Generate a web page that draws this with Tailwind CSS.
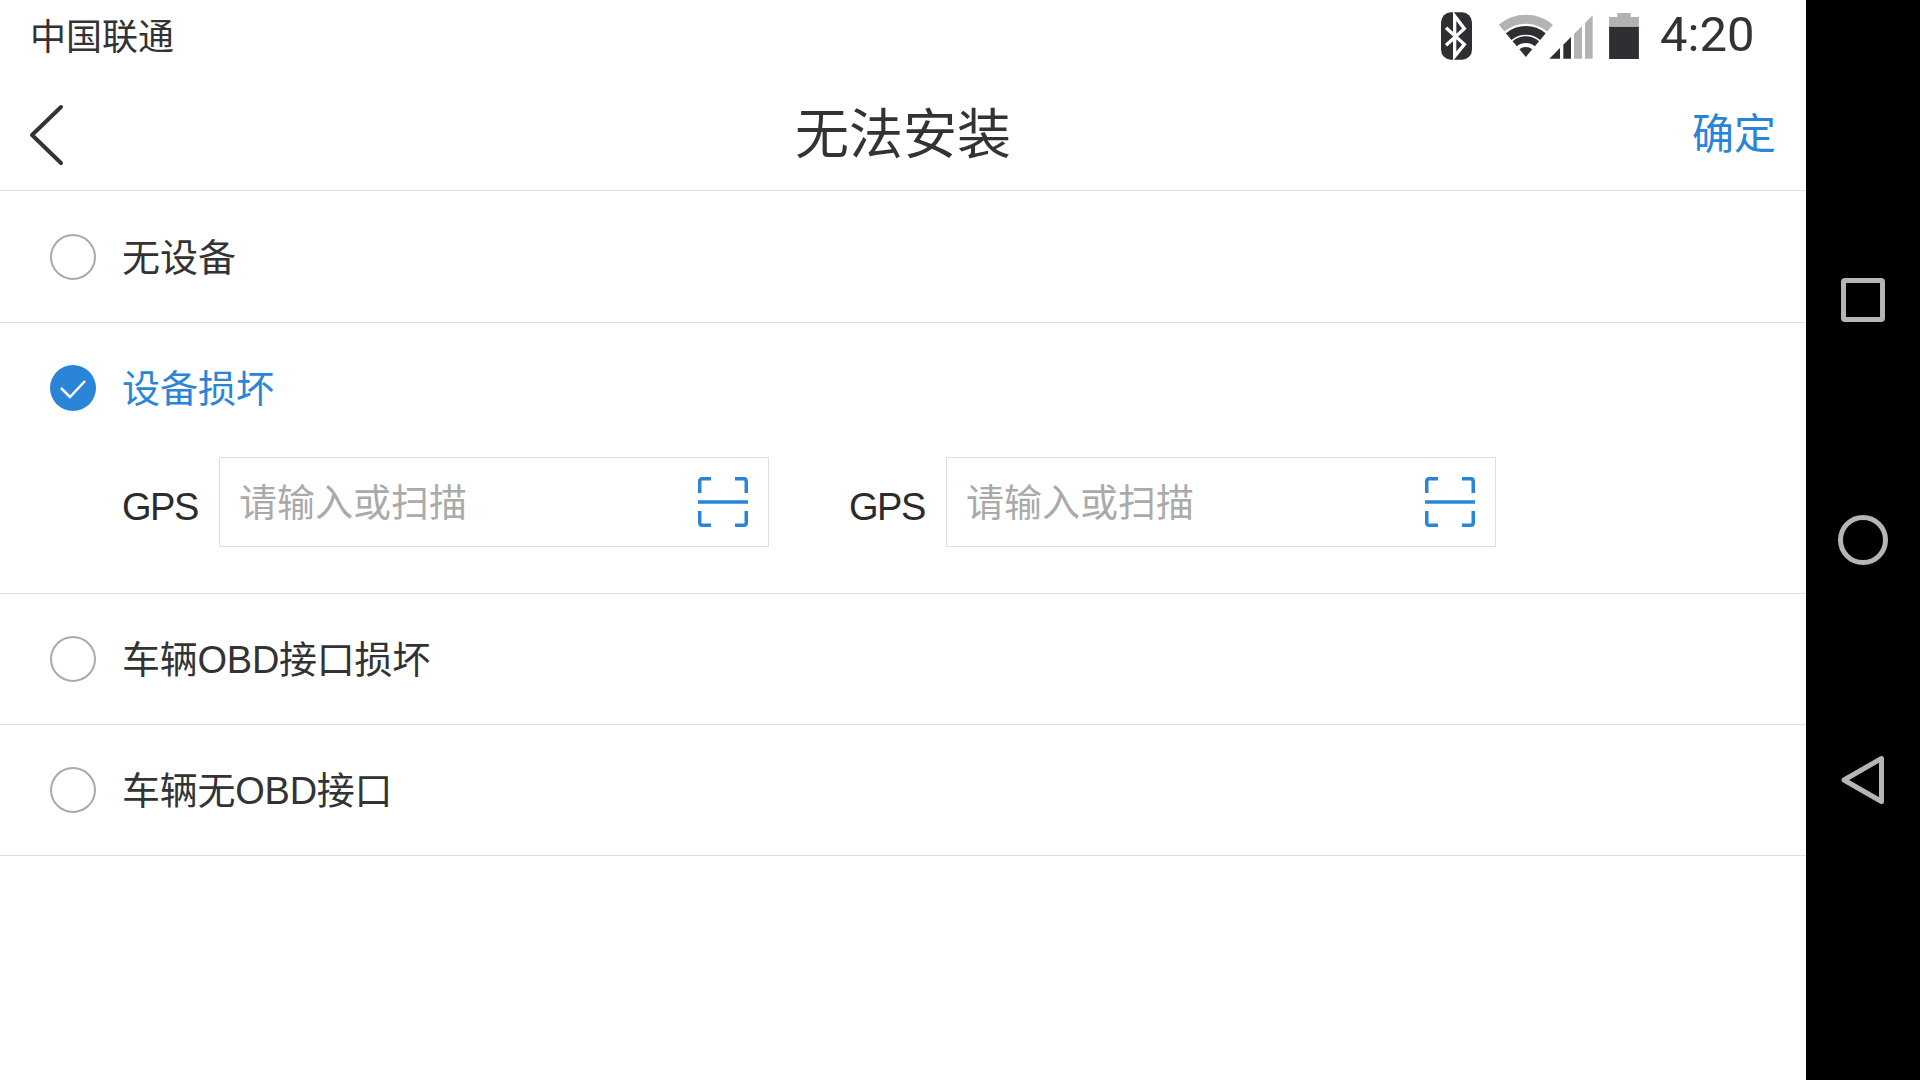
<!DOCTYPE html>
<html lang="zh-CN">
<head>
  <meta charset="UTF-8">
  <title>无法安装</title>
  <script src="https://cdn.jsdelivr.net/npm/@tailwindcss/browser@4"></script>
</head>
<body class="bg-black font-['Liberation_Sans','Noto_Sans_CJK_SC',sans-serif] text-[#333333]">
  <div class="flex h-[1080px] w-[1920px] overflow-hidden">
    <main class="h-full w-[1806px] bg-white">
      <!-- status bar -->
      <div class="flex h-[72px] items-center pl-[30px]">
        <span class="mt-[4px] text-[36px] leading-none">中国联通</span>
        <svg class="ml-[1267px] h-[48px] w-[31px]" viewBox="122 36 93 142">
          <rect x="122" y="36" width="93" height="142" rx="30" fill="#2e2f33"/>
          <polyline points="137,82 192,132 163,168 163,47 192,85 137,135" fill="none" stroke="#fff" stroke-width="10"/>
        </svg>
        <svg class="ml-[26px] h-[44px] w-[58px]" viewBox="295 43 173 132">
          <path d="M305.4 85.4 A113 113 0 0 1 450.6 85.4" fill="none" stroke="#b3b3b3" stroke-width="27"/>
          <path d="M326.6 110.7 A80 80 0 0 1 429.4 110.7" fill="none" stroke="#2e2f33" stroke-width="26"/>
          <path d="M344.6 132.2 A52 52 0 0 1 411.4 132.2" fill="none" stroke="#2e2f33" stroke-width="20"/>
          <path d="M378 172 L358.7 149 A30 30 0 0 1 397.3 149 Z" fill="#2e2f33"/>
        </svg>
        <svg class="-ml-[7px] mt-[1px] h-[44px] w-[44px]" viewBox="447 47 132 132">
          <polygon points="448,178 480,146 480,178" fill="#2e2f33"/>
          <polygon points="490,136 513,113 513,178 490,178" fill="#2e2f33"/>
          <polygon points="522,104 546,80 546,178 522,178" fill="#b3b3b3"/>
          <polygon points="555,71 578,48 578,178 555,178" fill="#b3b3b3"/>
        </svg>
        <svg class="ml-[16px] h-[46px] w-[30px]" viewBox="630 38 90 139">
          <rect x="655" y="38" width="40" height="13" fill="#b3b3b3"/>
          <rect x="630" y="50" width="90" height="30" fill="#b3b3b3"/>
          <rect x="630" y="80" width="90" height="97" fill="#2e2f33"/>
        </svg>
        <span class="-mt-[3px] ml-[21px] font-['Roboto',sans-serif] text-[49px] leading-none">4:20</span>
      </div>

      <!-- title bar -->
      <header class="relative flex h-[119px] items-center justify-center border-b border-[#e0e0e0] pt-[7px]">
        <svg class="absolute left-[28px] top-[32px] h-[62px] w-[36px]" viewBox="0 0 36 62">
          <polyline points="33,3 4,31 33,59" fill="none" stroke="#333" stroke-width="4" stroke-linecap="round" stroke-linejoin="round"/>
        </svg>
        <h1 class="text-[54px] leading-none">无法安装</h1>
        <a class="absolute right-[30px] top-[42px] text-[42px] leading-none text-[#2a85d8]">确定</a>
      </header>

      <!-- options -->
      <div class="flex h-[132px] items-center gap-[26px] border-b border-[#e0e0e0] pl-[50px]">
        <span class="h-[46px] w-[46px] rounded-full border-2 border-[#aaaaaa]"></span>
        <span class="mt-[2px] text-[38px] leading-none">无设备</span>
      </div>

      <div class="h-[271px] border-b border-[#e0e0e0] pl-[50px]">
        <div class="flex h-[131px] items-center gap-[26px]">
          <svg class="-mt-[2px] h-[46px] w-[46px]" viewBox="0 0 46 46">
            <circle cx="23" cy="23" r="23" fill="#2a85d8"/>
            <polyline points="11,23 20,32 35,16" fill="none" stroke="#fff" stroke-width="2.5"/>
          </svg>
          <span class="text-[38px] leading-none text-[#2a85d8]">设备损坏</span>
        </div>
        <div class="mt-[3px] flex items-center pl-[72px]">
          <label class="mt-[10px] w-[97px] text-[38px] leading-none tracking-[-1.5px] text-[#2b2b2b]">GPS</label>
          <div class="flex h-[90px] w-[550px] items-center border border-[#e0e0e0] pl-[19px] pr-[20px]">
            <input class="min-w-0 flex-1 bg-transparent pt-[2px] text-[38px] leading-none outline-none placeholder:text-[#aaaaaa]" placeholder="请输入或扫描">
            <svg class="h-[50px] w-[50px]" viewBox="0 0 50 50" fill="none" stroke="#2a85d8" stroke-width="3.5">
              <path d="M1.75 16 V4 a2.5 2.5 0 0 1 2.5 -2.25 H13 M37 1.75 H46 a2.5 2.5 0 0 1 2.25 2.25 V16 M0 25 H50 M1.75 34 V46 a2.5 2.5 0 0 0 2.5 2.25 H13 M37 48.25 H46 a2.5 2.5 0 0 0 2.25 -2.25 V34"/>
            </svg>
          </div>
          <label class="ml-[80px] mt-[10px] w-[97px] text-[38px] leading-none tracking-[-1.5px] text-[#2b2b2b]">GPS</label>
          <div class="flex h-[90px] w-[550px] items-center border border-[#e0e0e0] pl-[19px] pr-[20px]">
            <input class="min-w-0 flex-1 bg-transparent pt-[2px] text-[38px] leading-none outline-none placeholder:text-[#aaaaaa]" placeholder="请输入或扫描">
            <svg class="h-[50px] w-[50px]" viewBox="0 0 50 50" fill="none" stroke="#2a85d8" stroke-width="3.5">
              <path d="M1.75 16 V4 a2.5 2.5 0 0 1 2.5 -2.25 H13 M37 1.75 H46 a2.5 2.5 0 0 1 2.25 2.25 V16 M0 25 H50 M1.75 34 V46 a2.5 2.5 0 0 0 2.5 2.25 H13 M37 48.25 H46 a2.5 2.5 0 0 0 2.25 -2.25 V34"/>
            </svg>
          </div>
        </div>
      </div>

      <div class="flex h-[131px] items-center gap-[26px] border-b border-[#e0e0e0] pl-[50px]">
        <span class="h-[46px] w-[46px] rounded-full border-2 border-[#aaaaaa]"></span>
        <span class="mt-[2px] text-[38px] leading-none tracking-[-0.25px]">车辆OBD接口损坏</span>
      </div>
      <div class="flex h-[131px] items-center gap-[26px] border-b border-[#e0e0e0] pl-[50px]">
        <span class="h-[46px] w-[46px] rounded-full border-2 border-[#aaaaaa]"></span>
        <span class="mt-[2px] text-[38px] leading-none tracking-[-0.25px]">车辆无OBD接口</span>
      </div>
    </main>

    <!-- android nav bar -->
    <nav class="flex flex-1 flex-col items-center bg-black pt-[278px]">
      <span class="h-[44px] w-[44px] rounded-[4px] border-[5px] border-[#b5b5b5]"></span>
      <span class="mt-[193px] h-[50px] w-[50px] rounded-full border-[5px] border-[#b5b5b5]"></span>
      <svg class="mt-[190px] h-[50px] w-[44px]" viewBox="0 0 44 50">
        <path d="M40.5 3.5 V46.5 L3 25 Z" fill="none" stroke="#b5b5b5" stroke-width="5" stroke-linejoin="round"/>
      </svg>
    </nav>
  </div>
</body>
</html>
